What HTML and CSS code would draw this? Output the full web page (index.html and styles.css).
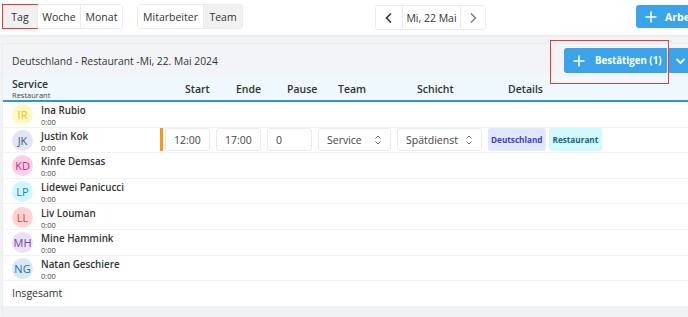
FILE: index.html
```html
<!DOCTYPE html>
<html lang="de">
<head>
  <meta charset="UTF-8" />
  <title>Dienstplan</title>
  <link rel="stylesheet" href="styles.css">
</head>
<body>
  <div class="topbar">
    <div class="btn-group">
      <button class="seg active marked">Tag</button>
      <button class="seg" style="width:43px">Woche</button>
      <button class="seg" style="width:42px">Monat</button>
    </div>
    <div class="btn-group group-view">
      <button class="seg" style="width:65px">Mitarbeiter</button>
      <button class="seg active" style="width:39px">Team</button>
    </div>
    <div class="btn-group nav">
      <button class="seg arrow">
        <svg width="10" height="12" viewBox="0 0 10 12"><path d="M7 1.5 2.5 6 7 10.5" fill="none" stroke="#333" stroke-width="1.6"/></svg>
      </button>
      <button class="seg date">Mi, 22 Mai</button>
      <button class="seg arrow next">
        <svg width="10" height="12" viewBox="0 0 10 12"><path d="M3 1.5 7.5 6 3 10.5" fill="none" stroke="#777" stroke-width="1.4"/></svg>
      </button>
    </div>
    <button class="btn-blue add-btn">
      <svg width="12" height="12" viewBox="0 0 12 12"><path d="M6 0.5v11M0.5 6h11" stroke="#fff" stroke-width="1.6"/></svg>
      Arbeitszeit
    </button>
  </div>

  <div class="card">
    <div class="card-head">
      <div class="card-title">Deutschland - Restaurant -Mi, 22. Mai 2024</div>
      <div class="confirm">
        <button class="btn-blue confirm-main">
          <svg width="12" height="12" viewBox="0 0 12 12"><path d="M6 0.5v11M0.5 6h11" stroke="#fff" stroke-width="1.6"/></svg>
          Bestätigen (1)
        </button>
        <button class="btn-blue confirm-drop">
          <svg width="11" height="8" viewBox="0 0 11 8"><path d="M1.5 2 5.5 6 9.5 2" fill="none" stroke="#fff" stroke-width="1.8"/></svg>
        </button>
      </div>
      <div class="marker"></div>
    </div>

    <div class="col-head">
      <div class="name-cell">
        <div class="col-team">Service</div>
        <div class="col-sub">Restaurant</div>
      </div>
      <div class="spacer"></div>
      <div class="hc w-time">Start</div>
      <div class="hc w-time">Ende</div>
      <div class="hc w-time">Pause</div>
      <div class="hc w-team">Team</div>
      <div class="hc w-shift">Schicht</div>
      <div class="hc">Details</div>
    </div>

    <div class="row">
      <div class="name-cell">
        <span class="avatar av-yellow">IR</span>
        <div class="person"><div class="pname">Ina Rubio</div><div class="ptime">0:00</div></div>
      </div>
    </div>
    <div class="row">
      <div class="name-cell">
        <span class="avatar av-slate">JK</span>
        <div class="person"><div class="pname">Justin Kok</div><div class="ptime">0:00</div></div>
      </div>
      <div class="bar"></div>
      <div class="field w-time">12:00</div>
      <div class="field w-time">17:00</div>
      <div class="field w-time">0</div>
      <div class="field select w-team">Service
        <svg width="8" height="10" viewBox="0 0 8 10"><path d="M1.5 3.5 4 1l2.5 2.5M1.5 6.5 4 9l2.5-2.5" fill="none" stroke="#666" stroke-width="1"/></svg>
      </div>
      <div class="field select w-shift">Spätdienst
        <svg width="8" height="10" viewBox="0 0 8 10"><path d="M1.5 3.5 4 1l2.5 2.5M1.5 6.5 4 9l2.5-2.5" fill="none" stroke="#666" stroke-width="1"/></svg>
      </div>
      <span class="badge badge-land">Deutschland</span>
      <span class="badge badge-loc">Restaurant</span>
    </div>
    <div class="row">
      <div class="name-cell">
        <span class="avatar av-pink">KD</span>
        <div class="person"><div class="pname">Kinfe Demsas</div><div class="ptime">0:00</div></div>
      </div>
    </div>
    <div class="row">
      <div class="name-cell">
        <span class="avatar av-cyan">LP</span>
        <div class="person"><div class="pname">Lidewei Panicucci</div><div class="ptime">0:00</div></div>
      </div>
    </div>
    <div class="row">
      <div class="name-cell">
        <span class="avatar av-red">LL</span>
        <div class="person"><div class="pname">Liv Louman</div><div class="ptime">0:00</div></div>
      </div>
    </div>
    <div class="row">
      <div class="name-cell">
        <span class="avatar av-purple">MH</span>
        <div class="person"><div class="pname">Mine Hammink</div><div class="ptime">0:00</div></div>
      </div>
    </div>
    <div class="row">
      <div class="name-cell">
        <span class="avatar av-blue">NG</span>
        <div class="person"><div class="pname">Natan Geschiere</div><div class="ptime">0:00</div></div>
      </div>
    </div>
    <div class="row total">Insgesamt</div>
    <div class="section">Abwesend</div>
  </div>
</body>
</html>
```

FILE: styles.css
```css
body {
  margin: 0;
  background: #f2f3f5;
  font-family: "Open Sans", "Liberation Sans", sans-serif;
  color: #333;
  overflow: hidden;
  width: 688px;
  height: 317px;
}
button {
  font-family: inherit;
  cursor: pointer;
  white-space: nowrap;
  flex-shrink: 0;
}
.topbar {
  display: flex;
  align-items: flex-start;
  height: 35px;
  padding: 4px 0 0 2px;
  box-sizing: border-box;
  background: #fff;
  box-shadow: 0 1px 2px rgba(0,0,0,0.06);
  width: 760px;
}
.btn-group {
  display: flex;
  border: 1px solid #eaebed;
  border-radius: 3px;
  height: 25px;
  box-sizing: border-box;
  flex-shrink: 0;
}
.group-view {
  margin-left: 14px;
}
.nav {
  margin-left: 132px;
  margin-top: 1px;
}
.seg {
  border: none;
  border-left: 1px solid #eaebed;
  background: #fff;
  font-size: 10.5px;
  color: #333;
  padding: 0;
  height: 100%;
  box-sizing: border-box;
}
.seg:first-child {
  border-left: none;
}
.seg.active {
  background: #f1f1f2;
}
.marked {
  outline: 1.5px solid #e23a3f;
  outline-offset: 0;
  width: 34px;
}
.arrow {
  width: 26px;
  display: flex;
  align-items: center;
  justify-content: center;
}
.next {
  width: 25px;
}
.date {
  width: 58px;
}
.btn-blue {
  background: #3ba3e9;
  color: #fff;
  border: none;
  font-weight: 700;
  font-size: 10.5px;
  display: flex;
  align-items: center;
}
.add-btn {
  margin-left: 150px;
  margin-top: 1px;
  height: 23px;
  border-radius: 3px;
  padding: 0 9px;
  gap: 8px;
}

.card {
  margin: 8px 0 0 2px;
  width: 740px;
  background: #fff;
  border: 1px solid #ececee;
  border-bottom: none;
  position: relative;
}
.card-head {
  height: 33px;
  background: #f3f4f7;
  display: flex;
  align-items: center;
  padding-left: 9px;
}
.card-title {
  width: 552px;
  flex-shrink: 0;
  font-size: 10.3px;
  font-weight: 500;
  color: #333;
}
.confirm {
  display: flex;
  height: 25px;
}
.confirm-main {
  width: 103px;
  border-radius: 3px 0 0 3px;
  padding: 0 0 0 9px;
  gap: 10px;
  font-size: 9.7px;
}
.confirm-drop {
  width: 24px;
  margin-left: 1px;
  border-radius: 0 3px 3px 0;
  justify-content: center;
  padding: 0;
}
.marker {
  position: absolute;
  left: 547px;
  top: -4px;
  width: 117px;
  height: 42px;
  border: 1.5px solid #e23a3f;
}

.col-head {
  display: flex;
  align-items: center;
  height: 23px;
  background: #eef8fd;
  border-bottom: 2px solid #2b9ac6;
}
.name-cell {
  width: 157px;
  box-sizing: border-box;
  padding-left: 9px;
  display: flex;
  align-items: center;
  gap: 8px;
  flex-shrink: 0;
}
.col-head .name-cell {
  display: block;
}
.col-team {
  font-size: 10.5px;
  font-weight: 600;
  line-height: 12px;
  margin-top: 1px;
}
.col-sub {
  font-size: 7.5px;
  line-height: 10px;
  color: #444;
}
.spacer {
  width: 5px;
}
.hc {
  font-size: 10.5px;
  font-weight: 600;
  color: #333;
  padding-left: 20px;
  box-sizing: border-box;
  flex-shrink: 0;
}
.w-time { width: 51px; }
.w-team { width: 79px; }
.w-shift { width: 91px; }
.field.w-time { width: 45px; }
.field.w-team { width: 73px; }
.field.w-shift { width: 85px; }

.row {
  display: flex;
  align-items: center;
  height: 25.6px;
  box-sizing: border-box;
  border-bottom: 1.5px solid #f1f2f4;
}
.avatar {
  width: 21px;
  height: 21px;
  border-radius: 50%;
  display: flex;
  align-items: center;
  justify-content: center;
  font-size: 11px;
  flex-shrink: 0;
  margin-top: 1px;
}
.av-yellow { background: #fef9c3; color: #e7c21b; }
.av-slate { background: #e2e6f3; color: #4b5786; }
.av-pink { background: #fbcfe8; color: #d0287a; }
.av-cyan { background: #cff7fd; color: #0b8eb5; }
.av-red { background: #fdd5d5; color: #e53935; }
.av-purple { background: #ece0f7; color: #7e3fa6; }
.av-blue { background: #d8e8f8; color: #2b6cb0; }
.person {
  margin-top: 3px;
}
.pname {
  font-size: 9.8px;
  font-weight: 600;
  color: #333;
  line-height: 13px;
}
.ptime {
  font-size: 7.5px;
  color: #444;
  line-height: 10px;
}
.bar {
  width: 3px;
  height: 23px;
  background: #f59a1b;
  margin-right: 2px;
  flex-shrink: 0;
}
.field {
  height: 23px;
  box-sizing: border-box;
  border: 1px solid #e9eaec;
  border-radius: 3px;
  font-size: 10.5px;
  color: #444;
  padding-left: 8px;
  display: flex;
  align-items: center;
  margin-right: 6px;
  flex-shrink: 0;
}
.select {
  justify-content: space-between;
  padding-right: 8px;
}
.badge {
  height: 23px;
  display: flex;
  align-items: center;
  padding: 0 3px;
  border-radius: 3px;
  font-size: 8.2px;
  font-weight: 700;
  margin-right: 3px;
}
.badge-land { background: #e1e7fd; color: #3f3fc4; }
.badge-loc { background: #d2f9fc; color: #17657e; padding: 0 4px; }
.total {
  padding-left: 9px;
  font-size: 10.5px;
  font-weight: 500;
  color: #333;
}
.section {
  background: #f1f2f5;
  height: 30px;
  padding: 9px 0 0 9px;
  box-sizing: border-box;
  font-size: 10.5px;
  font-weight: 600;
}
```
